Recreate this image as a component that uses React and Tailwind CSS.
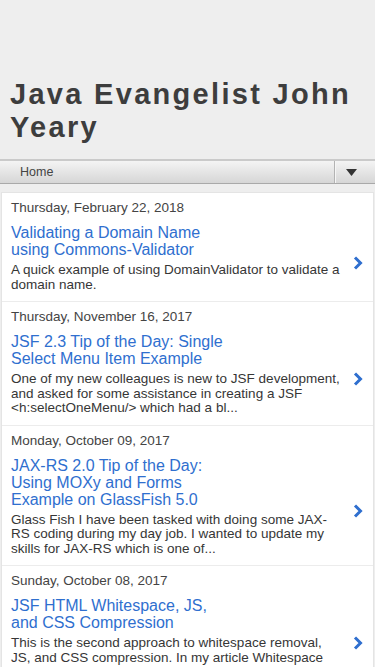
import React from 'react';

const posts = [
  {
    date: 'Thursday, February 22, 2018',
    title: 'Validating a Domain Name using Commons-Validator',
    snippet: 'A quick example of using DomainValidator to validate a domain name.',
  },
  {
    date: 'Thursday, November 16, 2017',
    title: 'JSF 2.3 Tip of the Day: Single Select Menu Item Example',
    snippet:
      'One of my new colleagues is new to JSF development, and asked for some assistance in creating a JSF <h:selectOneMenu/> which had a bl...',
  },
  {
    date: 'Monday, October 09, 2017',
    title: 'JAX-RS 2.0 Tip of the Day: Using MOXy and Forms Example on GlassFish 5.0',
    snippet:
      'Glass Fish I have been tasked with doing some JAX-RS coding during my day job. I wanted to update my skills for JAX-RS which is one of...',
  },
  {
    date: 'Sunday, October 08, 2017',
    title: 'JSF HTML Whitespace, JS, and CSS Compression',
    snippet:
      'This is the second approach to whitespace removal, JS, and CSS compression. In my article Whitespace Compression I demonstrated how...',
  },
];

// bold blue ">" at the right of each post
const Chevron = () => (
  <svg width="10" height="14" viewBox="0 0 10 14" className="block">
    <path d="M2 1.5 L7.5 7 L2 12.5" fill="none" stroke="#2f6fcf" strokeWidth="3" strokeLinejoin="miter" />
  </svg>
);

const PostItem = ({ post, first }) => (
  <div className={`pl-[9px] pt-[7px] ${first ? '' : 'border-t border-[#ececec]'}`}>
    <div className="text-[13.5px] leading-[16px] text-[#444]">{post.date}</div>
    <div className="flex items-center mt-[8px]">
      <div className="flex-1 min-w-0 pb-[9px]">
        <h3 className="max-w-[221px] text-[16px] leading-[17px] text-[#2f6fcf]">{post.title}</h3>
        <p className="mt-[5px] text-[13.5px] leading-[14.5px] text-[#363636] hyphens-manual">{post.snippet}</p>
      </div>
      <div className="w-[32px] shrink-0 pl-[12px]">
        <Chevron />
      </div>
    </div>
  </div>
);

export default function App() {
  return (
    <div className="min-h-screen bg-[#eeeeee] font-['Liberation_Sans',Arial,sans-serif]">
      {/* Header */}
      <div className="pt-[78px] pb-[15px] px-[10px]">
        <h1 className="text-[29px] leading-[33px] font-bold tracking-[2.3px] text-[#3d3d3d]">
          Java Evangelist John Yeary
        </h1>
      </div>

      {/* Nav bar */}
      <div className="flex border-t-2 border-b border-t-[#cacaca] border-b-[#a9a9a9] bg-gradient-to-b from-[#f4f4f4] to-[#d6d6d6] h-[25px]">
        <div className="flex-1 pl-[20px] text-[12.5px] leading-[22px] text-[#444]">Home</div>
        <div className="w-[41px] flex items-center border-l border-l-[#b3b3b3] shadow-[inset_1px_0_0_#f6f6f6]">
          <svg width="11" height="7" viewBox="0 0 11 7" className="ml-[11px]">
            <path d="M0 0 H11 L5.5 7 Z" fill="#333" />
          </svg>
        </div>
      </div>

      {/* Posts */}
      <div className="px-[1px] pt-[8px]">
        <div className="bg-white border border-[#e4e4e4]">
          {posts.map((p, i) => (
            <PostItem key={i} post={p} first={i === 0} />
          ))}
        </div>
      </div>
    </div>
  );
}
